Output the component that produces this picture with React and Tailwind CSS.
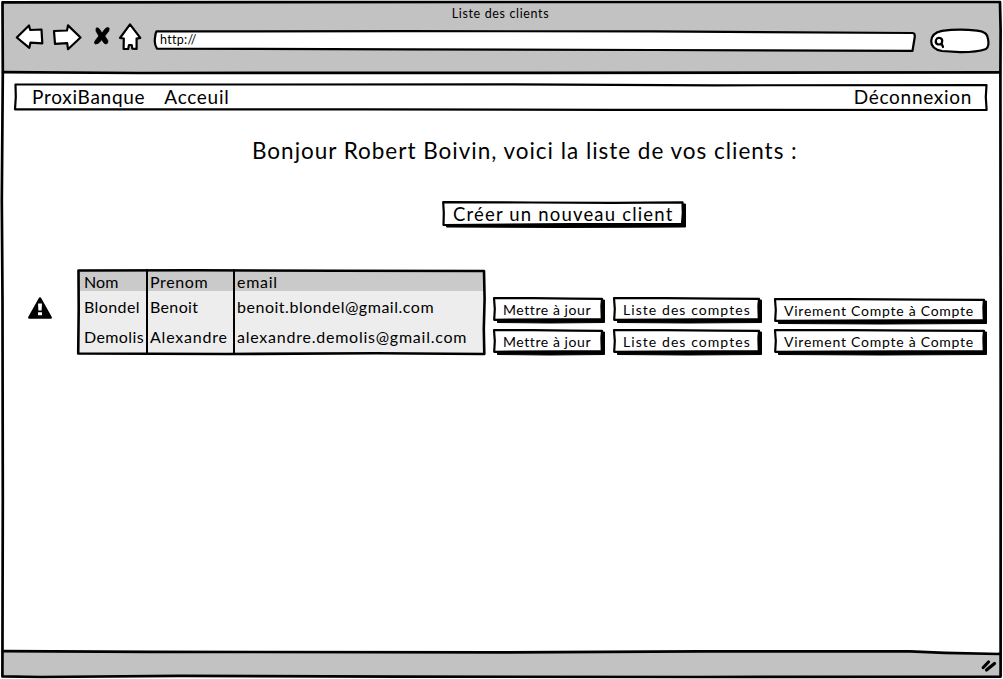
const Frame = ({ w, h, d, fill = 'none', sw = 2.2 }) => (
  <svg className="pointer-events-none absolute left-0 top-0 overflow-visible" width={w} height={h} viewBox={`0 0 ${w} ${h}`} aria-hidden="true">
    <path d={d} fill={fill} stroke="#000" strokeWidth={sw} strokeLinejoin="round" strokeLinecap="round" />
  </svg>
);

const ROWS = [
  { nom: 'Blondel', prenom: 'Benoit', email: 'benoit.blondel@gmail.com', nomT: 'tracking-[0.4px]', preT: 'tracking-[0.35px]', mailT: 'tracking-[0.52px]' },
  { nom: 'Demolis', prenom: 'Alexandre', email: 'alexandre.demolis@gmail.com', nomT: 'tracking-[0.4px]', preT: 'tracking-[0.8px]', mailT: 'tracking-[0.76px]' },
];

function SmallButton({ w, box, children }) {
  return (
    <button className={`relative flex h-[26px] items-start justify-start whitespace-nowrap bg-white text-[14px] ${box}`}>
      <Frame w={w} h={26} fill="#000" sw={1} d={`M4.5 23 L4.5 25.5 L${w / 2} 26 L${w - 1.5} 25.5 L${w - 1.5} 3 L${w - 4} 3 Z`} />
      <Frame w={w} h={26} fill="#fff" d={`M1 1 L${w * 0.35} 1.2 L${w * 0.7} 1.6 L${w - 4} 1.8 L${w - 4.6} 9 L${w - 4.2} 22 L${w * 0.6} 22.4 L1.2 22.8 L1.8 12 Z`} />
      <span className="relative ml-[10px] mt-[4px] leading-[18px]">{children}</span>
    </button>
  );
}

function Actions() {
  const row = (off) => (
    <div className="flex">
      <SmallButton w={113} box="w-[113px] mr-[7px] tracking-[0.57px]">Mettre à jour</SmallButton>
      <SmallButton w={150} box="w-[150px] mr-[11px] tracking-[1.07px]">Liste des comptes</SmallButton>
      <SmallButton w={214} box={`w-[214px] tracking-[0.75px] ${off}`}>Virement Compte à Compte</SmallButton>
    </div>
  );
  return (
    <div className="ml-[7px] mt-[28px] flex flex-col gap-[5px]">
      {row('mt-[1px]')}
      {row('')}
    </div>
  );
}

function Table() {
  return (
    <div className="relative h-[86px] w-[409px] p-[2px] text-[16px] leading-[20px]">
      <div className="h-full bg-[#ededed]">
        <div className="flex h-[20px] bg-[#cacaca] pt-[1px]">
          <div className="w-[66px] pl-[5px] tracking-[0.1px]">Nom</div>
          <div className="w-[87px] pl-[5px] tracking-[0.6px]">Prenom</div>
          <div className="pl-[5px] tracking-[0.7px]">email</div>
        </div>
        {ROWS.map((r) => (
          <div key={r.nom} className="flex h-[30px] pt-[6px]">
            <div className={`w-[66px] pl-[5px] ${r.nomT}`}>{r.nom}</div>
            <div className={`w-[87px] pl-[5px] ${r.preT}`}>{r.prenom}</div>
            <div className={`pl-[5px] ${r.mailT}`}>{r.email}</div>
          </div>
        ))}
      </div>
      <Frame w={409} h={86} sw={2.6} d="M1.5 1.5 L120 1.2 L260 1.8 L407 2 L407.6 30 L406.8 60 L407.3 85 L300 84.2 L150 85 L1.2 84.5 L1.7 40 Z" />
      <Frame w={409} h={86} sw={2} d="M70 1 L70 85 M157 1 L157 85" />
    </div>
  );
}

function Toolbar() {
  return (
    <div className="flex h-[48px]">
      <svg width="149" height="46" viewBox="2 22 149 46" className="shrink-0" fill="#fff" stroke="#000" strokeWidth="2.2" strokeLinejoin="round" aria-hidden="true">
        <path d="M16.8 37.5 L29 25.5 L30.2 30 L41.5 29.5 L42.3 43.3 L30.5 42.6 L29.3 47.8 Z" />
        <path d="M54 31 L67 30.5 L68 25.4 L80.5 37.5 L68 49.2 L67.2 43.2 L55 43.8 Z" />
        <path d="M96.2 28 Q98.5 27 100 30 L102 33 L105 29 Q107.5 26.5 109.2 28.2 L108.8 31 L104.8 36 L107.8 40.5 Q108.5 43.5 106 44 Q104 44 101.8 39.8 Q98 44.5 95.6 44 Q93.6 43.6 95 41 L98.8 36 L96 31 Z" fill="#000" strokeWidth="0.8" />
        <path d="M130 24.4 L140.3 37.8 L136.6 38.6 L136.6 49 L132.3 48.6 L131.7 45 L129 45 L128.2 49 L123.6 49 L123.8 38.5 L120 38 Z" />
      </svg>
      <div className="relative ml-[2px] mt-[8px] h-[22px] w-[762px]">
        <Frame w={762} h={22} fill="#fff" d="M3.5 1.4 Q120 0.8 250 1.1 L500 1.4 L759.5 3 Q762.4 3 761.6 8 L759.5 20.8 L500 20 L250 19.4 L4 18.6 Q1 14 2 8 Q2.4 3 3.5 1.4 Z" />
        <span className="relative ml-[7px] block text-[12.5px] leading-[20px] tracking-[0.3px]">http://</span>
      </div>
      <div className="relative ml-[15px] mt-[7px] h-[24px] w-[60px]">
        <Frame w={60} h={24} fill="#fff" d="M12 1.8 Q29 -0.5 47 1.6 Q58 2.8 58 10 Q59.6 17 56 20 Q46 23.4 30 23.2 L12 22 Q1 20 1.2 12 Q1.5 4 12 1.8 Z" />
        <Frame w={60} h={24} d="M6 11 Q7 8.2 10 9 Q13 10 12 13.4 Q11 16 8 15.4 Q5 14.5 6 11 M11.6 14.5 L13 18" />
      </div>
    </div>
  );
}

export default function App() {
  return (
    <div className="relative h-[679px] w-[1003px] overflow-hidden bg-white px-[2px] pt-[2px] text-black" style={{ fontFamily: 'Lato, "Liberation Sans", sans-serif' }}>
      <div className="flex h-[675px] w-[999px] flex-col">
        <header className="h-[71px] shrink-0 bg-[#c2c2c2]">
          <div className="h-[20px] pr-[2px] pt-[3px] text-center text-[12.5px] leading-[18px] tracking-[0.65px]">Liste des clients</div>
          <Toolbar />
        </header>
        <main className="flex-1">
          <nav className="relative ml-[12px] mt-[10px] flex h-[28px] w-[974px] pl-[18px] pt-[2px] text-[19px] leading-[24px]">
            <Frame w={974} h={28} d="M1.5 1.5 L200 1.5 L500 1.4 L700 2.3 L972.5 2 L971.8 14 L972.6 27 L600 26.8 L350 26.3 L1 26.3 L1.8 14 Z" />
            <a className="tracking-[0.72px]">ProxiBanque</a>
            <a className="ml-[19px] tracking-[0.7px]">Acceuil</a>
            <a className="ml-auto mr-[16px] tracking-[0.7px]">Déconnexion</a>
          </nav>
          <h1 className="ml-[250px] mt-[26px] whitespace-nowrap text-[22.5px] leading-[28px] tracking-[0.98px]">Bonjour Robert Boivin, voici la liste de vos clients :</h1>
          <button className="relative ml-[440px] mt-[36px] flex h-[27px] w-[244px] whitespace-nowrap text-[18.5px] leading-[24px] tracking-[1.18px]">
            <Frame w={244} h={27} fill="#000" sw={1} d="M4.5 22 L4.5 26 L120 26.5 L243.5 26 L243.5 3 L240 3 Z" />
            <Frame w={244} h={27} fill="#fff" d="M1.2 1.2 L90 1.5 L170 1.8 L240.5 1.4 L240.8 12 L240 23 L130 23.2 L1.5 24 L1.8 12 Z" />
            <span className="relative ml-[11px] mt-[1px]">Créer un nouveau client</span>
          </button>
          <section className="mt-[41px] flex">
            <svg className="ml-[26px] mr-[25px] mt-[28px] shrink-0" width="24" height="24" viewBox="0 0 24 24" aria-label="Attention">
              <path d="M12 0.2 Q12.8 0.2 13.3 1.3 L23.8 20 Q24.3 21.7 22.7 21.7 L1.3 21.7 Q-0.3 21.7 0.2 20 L10.7 1.3 Q11.2 0.2 12 0.2 Z" />
              <path d="M10 6.5 H14 L13.6 13.5 H10.4 Z M10 15.2 H14 V18.3 H10 Z" fill="#fff" />
            </svg>
            <Table />
            <Actions />
          </section>
        </main>
        <footer className="flex h-[25px] shrink-0 items-start justify-end bg-[#c2c2c2]">
          <svg className="mr-[3px] mt-[6px]" width="18" height="15" viewBox="0 0 18 15" fill="none" stroke="#000" strokeWidth="3.2" strokeLinecap="round" aria-hidden="true">
            <path d="M3.2 9.5 L8.5 4 M6.5 12 L14.5 5.5" />
          </svg>
        </footer>
      </div>
      <Frame w={1003} h={679} fill="#fff" sw={0} d="M700 648 L998 648 L998 654 L920 652 L850 651 L700 651 Z" />
      <Frame w={1003} h={679} sw={2.7} d="M2.5 2.3 L500 2 L1000 2 L1000.6 30 L1000.4 74 L1000.7 400 L1000.6 676.6 L700 677 L400 676.6 L180 675.8 L40 677 L2.4 676.4 L2.8 500 L2.5 300 L1.8 200 L2.8 73 Z" />
      <Frame w={1003} h={679} sw={2.7} d="M3 72.2 L140 73 L540 72.8 L1000 72.3 M3 651.2 L150 651.8 L500 652.4 L700 651.3 L910 651.3 L945 652.8 L1000 654" />
    </div>
  );
}
